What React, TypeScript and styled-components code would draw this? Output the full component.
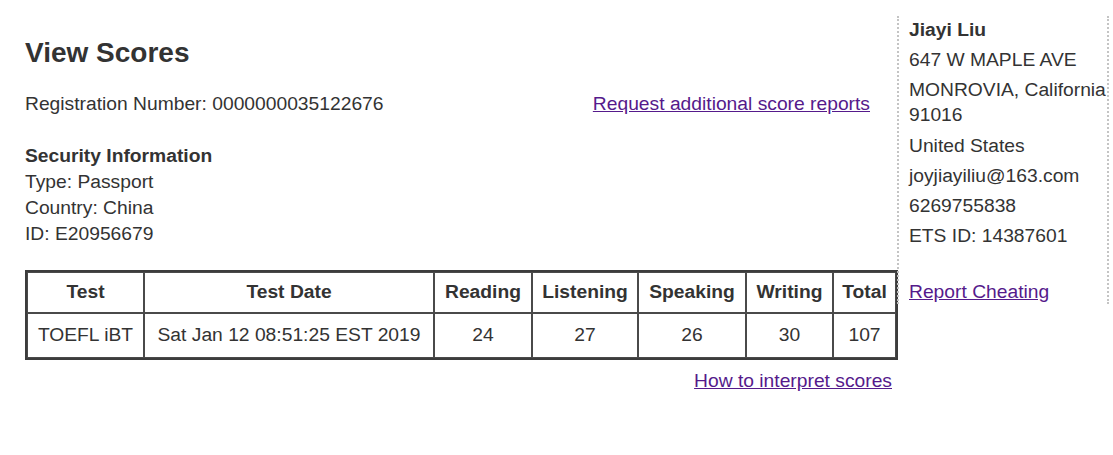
import React from "react";
import styled, { createGlobalStyle } from "styled-components";

const Global = createGlobalStyle`
  html, body { margin: 0; padding: 0; background: #fff; }
  body { font-family: "Liberation Sans", Arial, Helvetica, sans-serif; color: #333; font-size: 19.25px; }
`;

const Page = styled.div`
  display: flex;
  align-items: flex-start;
  padding-left: 25px;
`;

const Main = styled.main`
  width: 873px;
  flex: none;
  padding-top: 36px;
`;

const Title = styled.h1`
  margin: 0;
  font-size: 28px;
  line-height: 34px;
  font-weight: bold;
  color: #333;
`;

const RegRow = styled.div`
  display: flex;
  justify-content: space-between;
  align-items: center;
  margin-top: 21px;
  margin-right: 28px;
  line-height: 26px;
`;

const Link = styled.a`
  color: #551a8b;
  text-decoration: underline;
  cursor: pointer;
`;

const Security = styled.section`
  margin-top: 26px;
  line-height: 26px;
`;

const Heading = styled.div`
  font-weight: bold;
`;

const Line = styled.div``;

const Table = styled.table`
  margin-top: 23px;
  width: 100%;
  table-layout: fixed;
  border-collapse: separate;
  border-spacing: 0;
  border: 2px solid #3c3c3c;
`;

const Th = styled.th`
  border: 1px solid #4a4a4a;
  height: 37px;
  padding: 0 0 2px;
  font-weight: bold;
  text-align: center;
  line-height: 22px;
  color: #333;
`;

const Td = styled.td`
  border: 1px solid #4a4a4a;
  height: 41px;
  padding: 0 0 2px;
  text-align: center;
  line-height: 22px;
`;

const Footer = styled.div`
  margin-top: 8px;
  text-align: right;
  margin-right: 6px;
  line-height: 26px;
`;

const Side = styled.aside`
  margin-top: 16px;
  margin-left: -1px;
  width: 198px;
  flex: none;
  padding: 1px 0 0 10px;
  border-left: 2px dotted #c4c4c4;
  border-right: 2px dotted #c4c4c4;
  line-height: 25px;
`;

const SideItem = styled.div<{ $gap?: number; $bold?: boolean }>`
  margin-bottom: ${(p) => p.$gap ?? 5.2}px;
  font-weight: ${(p) => (p.$bold ? "bold" : "normal")};
`;

const cols = [117, 290, 98, 106, 108, 87, 63];
const headers = ["Test", "Test Date", "Reading", "Listening", "Speaking", "Writing", "Total"];
const row = ["TOEFL iBT", "Sat Jan 12 08:51:25 EST 2019", "24", "27", "26", "30", "107"];

export default function App() {
  return (
    <>
      <Global />
      <Page>
        <Main>
          <Title>View Scores</Title>
          <RegRow>
            <span>Registration Number: 0000000035122676</span>
            <Link>Request additional score reports</Link>
          </RegRow>
          <Security>
            <Heading>Security Information</Heading>
            <Line>Type: Passport</Line>
            <Line>Country: China</Line>
            <Line>ID: E20956679</Line>
          </Security>
          <Table>
            <colgroup>
              {cols.map((w, i) => (
                <col key={i} width={w} />
              ))}
            </colgroup>
            <thead>
              <tr>
                {headers.map((h) => (
                  <Th key={h}>{h}</Th>
                ))}
              </tr>
            </thead>
            <tbody>
              <tr>
                {row.map((c, i) => (
                  <Td key={i}>{c}</Td>
                ))}
              </tr>
            </tbody>
          </Table>
          <Footer>
            <Link>How to interpret scores</Link>
          </Footer>
        </Main>
        <Side>
          <SideItem $bold>Jiayi Liu</SideItem>
          <SideItem>647 W MAPLE AVE</SideItem>
          <SideItem>MONROVIA, California 91016</SideItem>
          <SideItem>United States</SideItem>
          <SideItem>joyjiayiliu@163.com</SideItem>
          <SideItem>6269755838</SideItem>
          <SideItem $gap={31}>ETS ID: 14387601</SideItem>
          <SideItem $gap={0}>
            <Link>Report Cheating</Link>
          </SideItem>
        </Side>
      </Page>
    </>
  );
}
